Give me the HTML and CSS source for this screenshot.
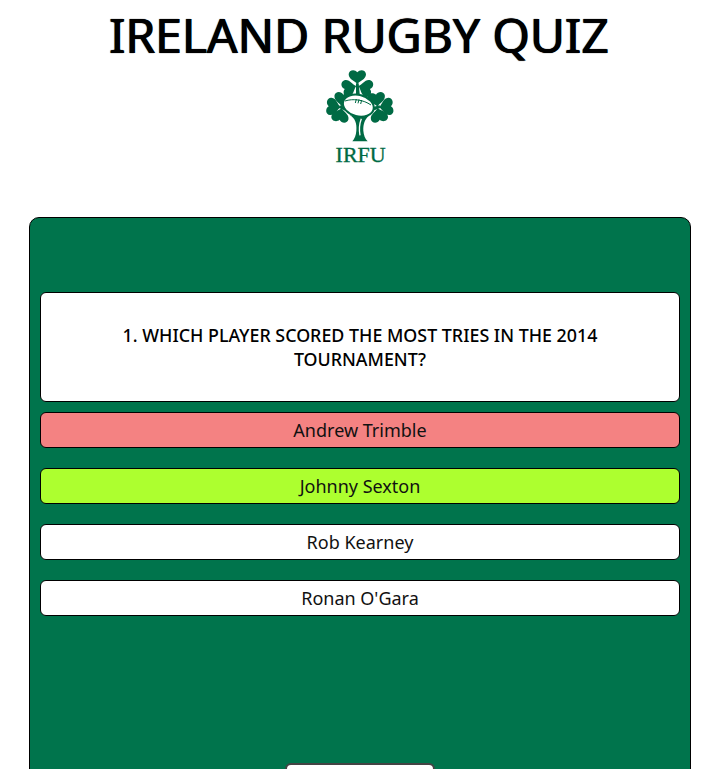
FILE: index.html

```html
<!DOCTYPE html>
<html>
<head>
  <meta charset="UTF-8">
  <title>Ireland Rugby Quiz</title>
  <link rel="stylesheet" href="styles.css">
</head>
<body>

<h1 class="title">IRELAND RUGBY QUIZ</h1>

<div class="logoRow">
  <svg class="logo" viewBox="0 0 360 330" role="img" aria-label="IRFU">
    <defs>
      <path id="lobe" d="M0 0C-6-10-26-14-26-30-26-43-8-47 0-36 8-47 26-43 26-30 26-14 6-10 0 0z"/>
    </defs>
    <g fill="#006a44">
      <!-- top shamrock -->
      <use href="#lobe" transform="translate(175 73)"/>
      <use href="#lobe" transform="translate(172 78) rotate(-105)"/>
      <use href="#lobe" transform="translate(178 78) rotate(105)"/>
      <path d="M171 70h8l4 40h-12z"/>
      <!-- left shamrock -->
      <use href="#lobe" transform="translate(128 140) rotate(8)"/>
      <use href="#lobe" transform="translate(125 142) rotate(-85)"/>
      <use href="#lobe" transform="translate(128 144) rotate(-170)"/>
      <path d="M122 136l28 8-2 12-28-12z"/>
      <!-- right shamrock -->
      <use href="#lobe" transform="translate(236 140) rotate(-8)"/>
      <use href="#lobe" transform="translate(240 142) rotate(85)"/>
      <use href="#lobe" transform="translate(236 144) rotate(170)"/>
      <path d="M242 136l-32 8 2 12 32-12z"/>
      <!-- trunk -->
      <path d="M152 166c16 8 22 24 20 46-1 14-5 24-12 32h46c-8-8-12-19-13-32-1-20 5-34 16-44z"/>
      <!-- ball -->
      <ellipse cx="178" cy="137" rx="50" ry="35" transform="rotate(14 178 137)"/>
    </g>
    <ellipse cx="178" cy="137" rx="44" ry="29" transform="rotate(14 178 137)" fill="#fff"/>
    <path d="M138 123c24-8 55-4 78 12" fill="none" stroke="#006a44" stroke-width="3"/>
    <path d="M172 117l-3 12M180 118l-3 12M188 120l-3 12" fill="none" stroke="#006a44" stroke-width="3"/>
    <path d="M183 226c-3-16-2-34 4-50" fill="none" stroke="#fff" stroke-width="4"/>
    <text class="logoText" x="185" y="306" text-anchor="middle">IRFU</text>
  </svg>
</div>

<div class="quizCard">
  <div class="questionBox">1. WHICH PLAYER SCORED THE MOST TRIES IN THE 2014 TOURNAMENT?</div>
  <div class="answers">
    <div class="answer wrong">Andrew Trimble</div>
    <div class="answer right">Johnny Sexton</div>
    <div class="answer">Rob Kearney</div>
    <div class="answer">Ronan O'Gara</div>
  </div>
  <div class="nextRow">
    <button class="nextBtn"></button>
  </div>
</div>

</body>
</html>
```

FILE: styles.css

```css
html, body {
  margin: 0;
  padding: 0;
  height: 769px;
  overflow: hidden;
  background: #fff;
  font-family: "Noto Sans", sans-serif;
  color: #000;
}

.title {
  margin: 0;
  padding-top: 2px;
  height: 66px;
  text-align: center;
  font-size: 48px;
  line-height: 65px;
  font-weight: 400;
  text-shadow: 1px 0 0 #000, 0 0 1px #000;
}

.logoRow {
  display: flex;
  justify-content: center;
  height: 149px;
}

.logo {
  width: 120px;
  height: 110px;
  margin-top: -8px;
}

.logoText {
  font-family: "Liberation Serif", serif;
  font-size: 66px;
  fill: #006a44;
  stroke: #006a44;
  stroke-width: 1;
}

.quizCard {
  margin: 0 26px 0 29px;
  height: 640px;
  box-sizing: border-box;
  background: #00744c;
  border: 1px solid #000;
  border-radius: 10px;
  padding: 74px 10px 0;
}

.questionBox {
  box-sizing: border-box;
  height: 110px;
  padding: 0 60px;
  display: flex;
  align-items: center;
  justify-content: center;
  text-align: center;
  background: #fff;
  border: 1px solid #000;
  border-radius: 6px;
  font-size: 17.85px;
  line-height: 24px;
  font-weight: 500;
}

.answers {
  display: flex;
  flex-direction: column;
  gap: 20px;
  margin-top: 10px;
}

.answer {
  box-sizing: border-box;
  height: 36px;
  line-height: 34px;
  text-align: center;
  background: #fff;
  border: 1px solid #000;
  border-radius: 6px;
  font-size: 18px;
  color: #111;
}

.wrong {
  background: #f48282;
}

.right {
  background: #adff2f;
}

.nextRow {
  display: flex;
  justify-content: center;
  margin-top: 147px;
}

.nextBtn {
  width: 150px;
  height: 36px;
  background: #fff;
  border: 2px solid #444;
  border-radius: 6px;
}
```
